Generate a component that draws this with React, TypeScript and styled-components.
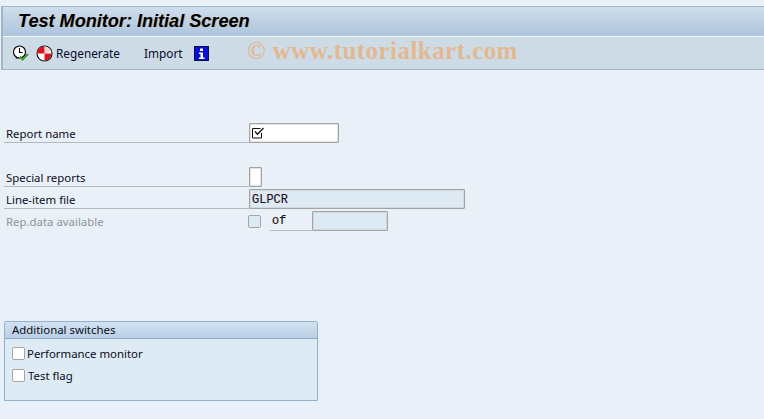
import React from "react";
import styled, { createGlobalStyle } from "styled-components";

const Global = createGlobalStyle`
  html, body { margin: 0; padding: 0; background: #e9f0f7; }
  body { width: 764px; height: 419px; overflow: hidden; font-family: "Noto Sans", "DejaVu Sans", sans-serif; font-size: 11.4px; color: #0c0c20; }
`;

const Page = styled.div`
  width: 764px;
  height: 419px;
  display: flex;
  flex-direction: column;
  padding-top: 6px;
  box-sizing: border-box;
`;

const Header = styled.header`
  position: relative;
  margin-left: 1px;
  border-top: 1px solid #a4b3c6;
  border-left: 2px solid #a4b3c6;
  border-bottom: 1px solid #a4b3c6;
  height: 64px;
  box-sizing: border-box;
  display: flex;
  flex-direction: column;
`;

const TitleBar = styled.div`
  height: 29px;
  background: linear-gradient(#cfdeec, #adc4dc);
  border-bottom: 1px solid #f1f6fa;
  display: flex;
  align-items: center;
  padding-left: 15px;
  flex: none;
`;

const Title = styled.h1`
  margin: 0;
  font: italic 700 18.1px "Liberation Sans", Arial, sans-serif;
  color: #000;
  text-shadow: 1px 0 0 rgba(190, 120, 20, 0.35);
`;

const Toolbar = styled.div`
  flex: 1;
  background: #cddbe7;
  display: flex;
  align-items: center;
  padding-left: 9px;
`;

const ClockButton = styled.span`
  display: inline-flex;
  width: 17px;
  height: 17px;
  margin-right: 7px;
`;

const StopButton = styled(ClockButton)`
  margin-right: 3px;
`;

const ToolText = styled.span<{ $gap: number }>`
  font-size: 11.8px;
  color: #0b0b2a;
  margin-right: ${(p) => p.$gap}px;
`;

const Watermark = styled.div`
  position: absolute;
  left: 244px;
  top: 30px;
  font: 700 25px "Liberation Serif", serif;
  color: #e4b88f;
  white-space: nowrap;
  letter-spacing: 0.45px;
`;

const Form = styled.main`
  display: flex;
  flex-direction: column;
  padding: 51px 0 0 4px;
`;

const Row = styled.div<{ $top?: number }>`
  display: flex;
  align-items: flex-end;
  height: 20px;
  margin-top: ${(p) => p.$top ?? 2}px;
`;

const Label = styled.label<{ $muted?: boolean }>`
  width: 245px;
  height: 20px;
  box-sizing: border-box;
  padding-left: 2px;
  line-height: 21px;
  flex: none;
  border-bottom: ${(p) => (p.$muted ? "0" : "1px solid #b4b9bd")};
  color: ${(p) => (p.$muted ? "#8f959b" : "#0c0c20")};
`;

const Field = styled.div<{ $w: number; $readonly?: boolean }>`
  width: ${(p) => p.$w}px;
  height: 20px;
  box-sizing: border-box;
  flex: none;
  border: 1px solid #a3a3a3;
  box-shadow: inset 0 0 0 0.5px #c4c8cc;
  border-radius: 1px;
  background: ${(p) => (p.$readonly ? "#deeaf3" : "#fff")};
  padding-left: 2px;
  display: flex;
  align-items: center;
  color: #101030;
`;

const FieldValue = styled.span`
  font: 12px/20px "Liberation Mono", monospace;
  padding-top: 1px;
  text-shadow: -0.4px 0 0 rgba(190, 120, 20, 0.5);
`;

const Box = styled.span`
  width: 13px;
  height: 13px;
  box-sizing: border-box;
  flex: none;
  border: 1px solid #a5a5a5;
  border-radius: 2px;
  background: #fff;
`;

const MutedBox = styled(Box)`
  background: #deeaf3;
  align-self: flex-start;
  margin: 4px 0 0 -1px;
`;

const OfLabel = styled.span`
  width: 42px;
  height: 20px;
  flex: none;
  margin-left: 9px;
  box-sizing: border-box;
  border-bottom: 1px solid #b4b9bd;
  padding-left: 2px;
  font: 12px/21px "Liberation Mono", monospace;
  text-shadow: -0.4px 0 0 rgba(190, 120, 20, 0.5);
`;

const Group = styled.section`
  margin-top: 90px;
  width: 314px;
  height: 80px;
  box-sizing: border-box;
  border: 1px solid #92b0d0;
  border-radius: 2px 2px 0 0;
  background: #deeaf4;
`;

const GroupTitle = styled.div`
  height: 17px;
  box-sizing: border-box;
  background: linear-gradient(#d3e2f0, #b9cfe6);
  border-bottom: 1px solid #8aa9c9;
  padding-left: 7px;
  line-height: 15px;
  color: #0c0c20;
`;

const GroupBody = styled.div`
  display: flex;
  flex-direction: column;
  gap: 4px;
  padding: 5px 0 0 7px;
`;

const CheckRow = styled.div<{ $gap: number }>`
  display: flex;
  align-items: center;
  height: 18px;
  gap: ${(p) => p.$gap}px;
`;

const ClockIcon = () => (
  <svg width="17" height="17" viewBox="0 0 17 17">
    <circle cx="7.500" cy="7" r="6" fill="#fff" stroke="#000" strokeWidth="1.100" />
    <path d="M7.500 3v4.500h3" fill="none" stroke="#000" strokeWidth="1.100" />
    <path d="M3.500 13.500h5" stroke="#666" strokeWidth="1" />
    <path d="M8 11.500l2.500 3 5.500-5.500" fill="none" stroke="#3f9a2c" strokeWidth="2" />
  </svg>
);

const StopIcon = () => (
  <svg width="17" height="17" viewBox="0 0 17 17">
    <circle cx="8.500" cy="8.500" r="7.500" fill="#fff" stroke="#111" strokeWidth="1.100" />
    <path d="M8.500 1.500A7 7 0 0 0 1.500 8.500H8.500z" fill="#e01020" />
    <path d="M8.500 8.500h7A7 7 0 0 1 8.500 15.500z" fill="#e01020" />
    <path d="M8.500 1.500A7 7 0 0 1 15 6L9 8.500z" fill="#f4c0c4" opacity=".8" />
  </svg>
);

const InfoIcon = () => (
  <svg width="15" height="15" viewBox="0 0 15 15">
    <rect x="0.500" y="0.500" width="14" height="14" fill="#0a10d8" stroke="#001050" />
    <rect x="6" y="2.500" width="3" height="2.500" fill="#fff" />
    <path d="M5 6.500h4v5h1.500v1.500h-5.500v-1.500H6.500v-3.500H5z" fill="#fff" />
  </svg>
);

const TickIcon = () => (
  <svg width="12" height="12" viewBox="0 0 12 12">
    <path d="M9.500 6v5h-9v-9.500h8" fill="none" stroke="#111" strokeWidth="1" />
    <path d="M3 4.500l2.500 2.800 6-6.300" fill="none" stroke="#111" strokeWidth="1.300" />
  </svg>
);

export default function App() {
  return (
    <>
      <Global />
      <Page>
        <Header>
          <TitleBar>
            <Title>Test Monitor: Initial Screen</Title>
          </TitleBar>
          <Toolbar>
            <ClockButton><ClockIcon /></ClockButton>
            <StopButton><StopIcon /></StopButton>
            <ToolText $gap={24}>Regenerate</ToolText>
            <ToolText $gap={11}>Import</ToolText>
            <InfoIcon />
          </Toolbar>
          <Watermark>© www.tutorialkart.com</Watermark>
        </Header>
        <Form>
          <Row>
            <Label>Report name</Label>
            <Field $w={90}><TickIcon /></Field>
          </Row>
          <Row $top={24}>
            <Label>Special reports</Label>
            <Field $w={13} />
          </Row>
          <Row>
            <Label>Line-item file</Label>
            <Field $w={216} $readonly><FieldValue>GLPCR</FieldValue></Field>
          </Row>
          <Row>
            <Label $muted>Rep.data available</Label>
            <MutedBox />
            <OfLabel>of</OfLabel>
            <Field $w={76} $readonly />
          </Row>
          <Group>
            <GroupTitle>Additional switches</GroupTitle>
            <GroupBody>
              <CheckRow $gap={2}><Box />Performance monitor</CheckRow>
              <CheckRow $gap={3}><Box />Test flag</CheckRow>
            </GroupBody>
          </Group>
        </Form>
      </Page>
    </>
  );
}
